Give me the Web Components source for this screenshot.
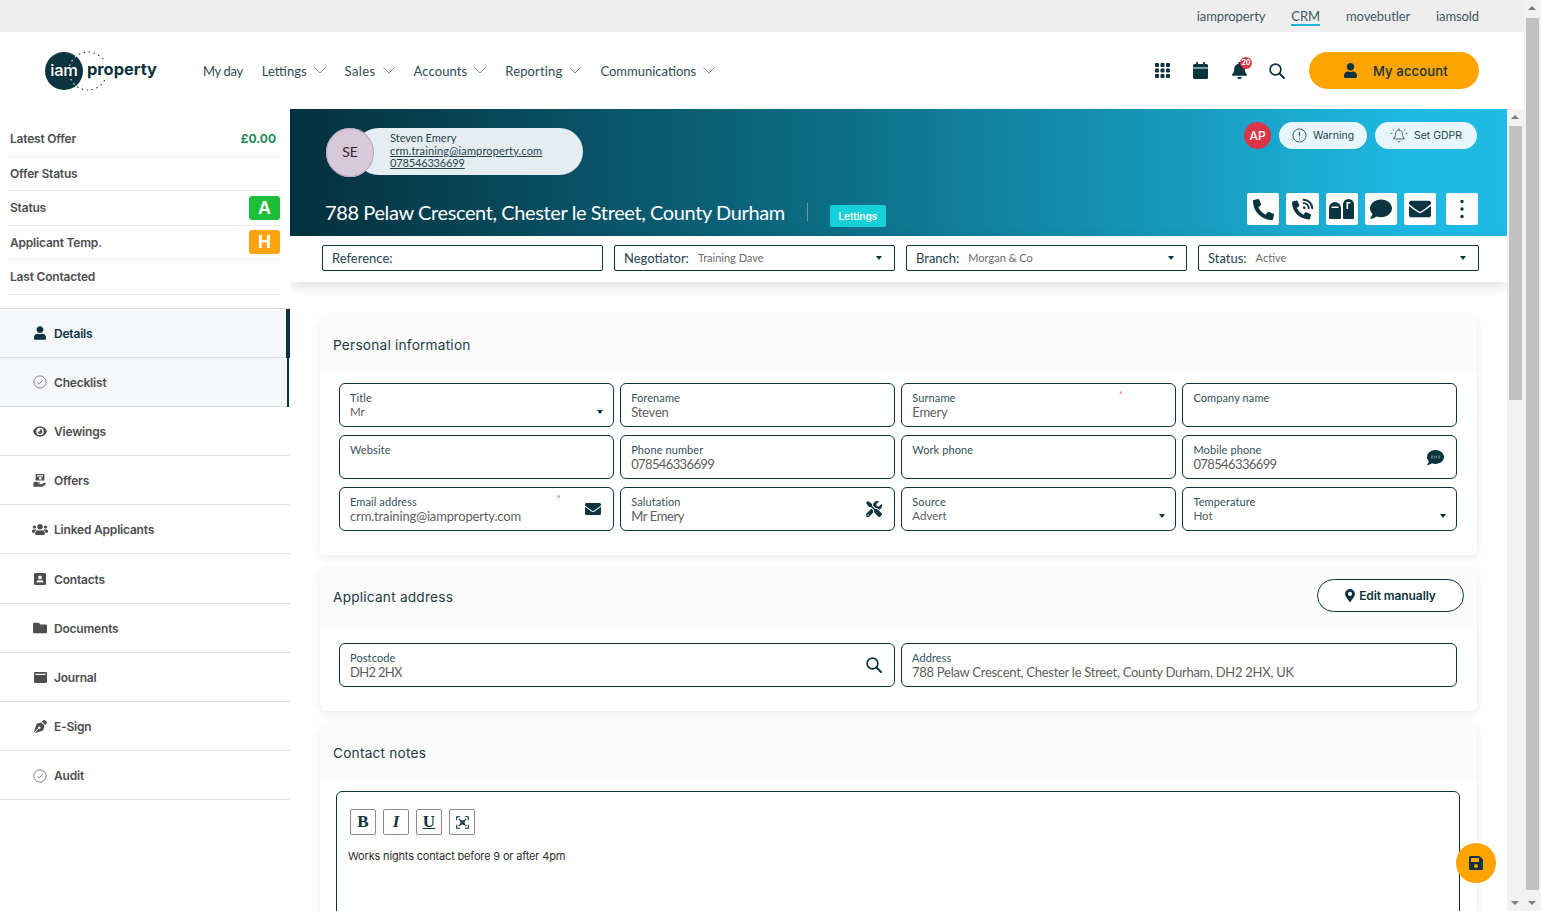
<!DOCTYPE html>
<html lang="en">
<head>
<meta charset="utf-8">
<title>Applicant</title>
<style>
    html, body { margin: 0; height: 100%; overflow: hidden; }
    body {
        display: flex;
        background: #fff;
        color: #0b3340;
        font-family: "Lato", "Liberation Sans", sans-serif;
    }
    .frame { flex: 1; min-width: 0; display: flex; flex-direction: column; height: 911px; }
    .work { flex: 1; min-height: 0; display: flex; }
    .pane { flex: 1; min-width: 0; display: flex; flex-direction: column; overflow: hidden; position: relative; }
    .content { flex: 1; min-height: 0; overflow: hidden; display: flex; flex-direction: column; gap: 13px; padding: 34px 30px 0; }
    .grid4 { display: grid; grid-template-columns: repeat(4, 1fr); gap: 8px 6.6px; }
    .grid2 { display: grid; grid-template-columns: repeat(2, 1fr); gap: 6px; }
</style>
</head>
<body>
<div class="frame">
    <top-bar></top-bar>
    <main-header></main-header>
    <div class="work">
        <side-panel></side-panel>
        <div class="pane">
            <record-banner></record-banner>
            <filter-bar></filter-bar>
            <div class="content">
                <form-card heading="Personal information">
                    <div class="grid4">
                        <field-box label="Title" value="Mr" select></field-box>
                        <field-box label="Forename" value="Steven"></field-box>
                        <field-box label="Surname" value="Emery" required></field-box>
                        <field-box label="Company name"></field-box>
                        <field-box label="Website"></field-box>
                        <field-box label="Phone number" value="078546336699" style="--track:-.62px"></field-box>
                        <field-box label="Work phone"></field-box>
                        <field-box label="Mobile phone" value="078546336699" icon="sms" style="--track:-.62px"></field-box>
                        <field-box label="Email address" value="crm.training@iamproperty.com" required icon="envelope" style="--track:-.15px"></field-box>
                        <field-box label="Salutation" value="Mr Emery" icon="tools" style="--track:-.4px"></field-box>
                        <field-box label="Source" value="Advert" select></field-box>
                        <field-box label="Temperature" value="Hot" select></field-box>
                    </div>
                </form-card>
                <form-card heading="Applicant address" roomy>
                    <outline-button slot="action"></outline-button>
                    <div class="grid2">
                        <field-box label="Postcode" value="DH2 2HX" icon="search" style="--track:-.7px"></field-box>
                        <field-box label="Address" value="788 Pelaw Crescent, Chester le Street, County Durham, DH2 2HX, UK" style="--track:-.27px"></field-box>
                    </div>
                </form-card>
                <form-card heading="Contact notes" flush>
                    <notes-editor>Works nights contact before 9 or after 4pm</notes-editor>
                </form-card>
            </div>
            <save-fab></save-fab>
        </div>
        <scroll-bar thumb-top="17" thumb-height="274"></scroll-bar>
    </div>
</div>
<scroll-bar thumb-top="18" thumb-height="872"></scroll-bar>

<script>
const ICONS = {
    user: ['0 0 448 512', '<path d="M224 256c70.7 0 128-57.3 128-128S294.7 0 224 0 96 57.3 96 128s57.3 128 128 128zm89.6 32h-16.7c-22.2 10.2-46.9 16-72.9 16s-50.6-5.8-72.9-16h-16.7C60.2 288 0 348.2 0 422.4V464c0 26.5 21.5 48 48 48h352c26.5 0 48-21.5 48-48v-41.6c0-74.2-60.2-134.4-134.4-134.4z"/>'],
    phone: ['0 0 512 512', '<path d="M497.39 361.8l-112-48a24 24 0 0 0-28 6.9l-49.6 60.6A370.66 370.66 0 0 1 130.6 204.11l60.6-49.6a23.94 23.94 0 0 0 6.9-28l-48-112A24.16 24.16 0 0 0 122.6.61l-104 24A24 24 0 0 0 0 48c0 256.5 207.9 464 464 464a24 24 0 0 0 23.4-18.6l24-104a24.29 24.29 0 0 0-14.01-27.6z"/>'],
    phonewave: ['0 0 512 512', '<path transform="translate(0 60) scale(.86)" d="M497.39 361.8l-112-48a24 24 0 0 0-28 6.9l-49.6 60.6A370.66 370.66 0 0 1 130.6 204.11l60.6-49.6a23.94 23.94 0 0 0 6.9-28l-48-112A24.16 24.16 0 0 0 122.6.61l-104 24A24 24 0 0 0 0 48c0 256.5 207.9 464 464 464a24 24 0 0 0 23.4-18.6l24-104a24.29 24.29 0 0 0-14.01-27.6z"/><g fill="none" stroke="currentColor" stroke-width="44" stroke-linecap="round"><path d="M270 40c110 0 200 90 200 200"/><path d="M270 120c66 0 120 54 120 120"/></g><circle cx="285" cy="225" r="30"/>'],
    mailbox: ['0 0 26 20', '<path fill-rule="evenodd" d="M6 3a6 6 0 0 1 6 6v10a1 1 0 0 1-1 1H1a1 1 0 0 1-1-1V9a6 6 0 0 1 6-6zM2.500 7.500V9h7V7.500z"/><path fill-rule="evenodd" d="M19.500 0A5.500 5.500 0 0 1 25 5.500V19a1 1 0 0 1-1 1h-9a1 1 0 0 1-1-1V5.500A5.500 5.500 0 0 1 19.500 0zM17.500 3v7h1.600V4.600h2.400V3z"/>'],
    comment: ['0 0 512 512', '<path d="M256 32C114.6 32 0 125.1 0 240c0 49.6 21.4 95 57 130.7C44.5 421.1 2.7 466 2.2 466.5c-2.2 2.3-2.8 5.7-1.5 8.7S4.8 480 8 480c66.3 0 116-31.8 140.6-51.4 32.7 12.3 69 19.4 107.4 19.4 141.4 0 256-93.1 256-208S397.4 32 256 32z"/>'],
    envelope: ['0 0 512 512', '<path d="M502.3 190.8c3.9-3.1 9.7-.2 9.7 4.7V400c0 26.5-21.5 48-48 48H48c-26.5 0-48-21.5-48-48V195.6c0-5 5.7-7.8 9.7-4.7 22.4 17.4 52.1 39.5 154.1 113.6 21.1 15.4 56.7 47.8 92.2 47.6 35.7.3 72-32.8 92.3-47.6 102-74.1 131.6-96.3 154-113.7zM256 320c23.2.4 56.6-29.2 73.4-41.4 132.7-96.3 142.8-104.7 173.4-128.7 5.8-4.5 9.2-11.5 9.2-18.9v-19c0-26.5-21.5-48-48-48H48C21.5 64 0 85.5 0 112v19c0 7.4 3.4 14.3 9.2 18.9 30.6 23.9 40.7 32.4 173.4 128.7 16.8 12.2 50.2 41.8 73.4 41.4z"/>'],
    dots: ['0 0 16 32', '<circle cx="8" cy="6" r="2.2"/><circle cx="8" cy="16" r="2.2"/><circle cx="8" cy="26" r="2.2"/>'],
    grid: ['0 0 15 15', '<rect width="4" height="4" rx=".9"/><rect x="5.5" width="4" height="4" rx=".9"/><rect x="11" width="4" height="4" rx=".9"/><rect y="5.5" width="4" height="4" rx=".9"/><rect x="5.5" y="5.5" width="4" height="4" rx=".9"/><rect x="11" y="5.5" width="4" height="4" rx=".9"/><rect y="11" width="4" height="4" rx=".9"/><rect x="5.5" y="11" width="4" height="4" rx=".9"/><rect x="11" y="11" width="4" height="4" rx=".9"/>'],
    calendar: ['0 0 15 17', '<rect x="3" width="2" height="4" rx=".8"/><rect x="10" width="2" height="4" rx=".8"/><path d="M1.500 2H13.500A1.500 1.500 0 0 1 15 3.500V5.500H0V3.500A1.500 1.500 0 0 1 1.500 2zM0 6.500h15V15.500A1.500 1.500 0 0 1 13.500 17h-12A1.500 1.500 0 0 1 0 15.500z"/>'],
    bell: ['0 0 448 512', '<path d="M224 512c35.32 0 63.97-28.65 63.97-64H160.03c0 35.35 28.65 64 63.97 64zm215.39-149.71c-19.32-20.76-55.47-51.99-55.47-154.29 0-77.7-54.48-139.9-127.94-155.16V32c0-17.67-14.32-32-31.98-32s-31.98 14.33-31.98 32v20.84C118.56 68.1 64.08 130.3 64.08 208c0 102.3-36.15 133.53-55.47 154.29-6 6.45-8.66 14.16-8.61 21.71.11 16.4 12.98 32 32.1 32h383.8c19.12 0 32-15.6 32.1-32 .05-7.55-2.61-15.27-8.61-21.71z"/>'],
    search: ['0 0 16 16', '<circle cx="6.500" cy="6.500" r="5.400" fill="none" stroke="currentColor" stroke-width="1.700"/><path d="M10.500 10.500L15 15" fill="none" stroke="currentColor" stroke-width="2" stroke-linecap="round"/>'],
    check: ['0 0 16 16', '<circle cx="8" cy="8" r="7" fill="none" stroke="currentColor" stroke-width=".8"/><path d="M5 8.300l2.100 2L11 6" fill="none" stroke="currentColor" stroke-width=".8"/>'],
    eye: ['0 0 16 12', '<path fill-rule="evenodd" d="M8 0c3.700 0 6.700 2.400 8 6-1.300 3.600-4.300 6-8 6S1.300 9.600 0 6c1.300-3.600 4.300-6 8-6zm0 1.800A4.200 4.200 0 1 0 8 10.200 4.200 4.200 0 0 0 8 1.800z"/><path d="M8 3.300a2.700 2.700 0 1 1-2.700 2.700c.6.500 1.600.4 2.100-.2.500-.5.600-1.700.6-2.500z"/>'],
    offers: ['0 0 16 16', '<path fill-rule="evenodd" d="M3 0h10v7.500H3zM4.500 1.300v1.500h7V1.300zM6.800 3.600v2.600h3V3.600z"/><path d="M.5 9.700c1.200-.9 2.600-1 4-.6l3 .7c.8.2.8 1.400-.2 1.400H5.500v.6h3.700l3.500-1.500c1.200-.5 2.200.2 1.800 1-1.500 1.800-3.400 3.400-5.900 3.400H.5z"/>'],
    users: ['0 0 640 512', '<path d="M96 224c35.300 0 64-28.700 64-64s-28.700-64-64-64-64 28.700-64 64 28.700 64 64 64zm448 0c35.300 0 64-28.700 64-64s-28.700-64-64-64-64 28.700-64 64 28.700 64 64 64zm32 32h-64c-17.600 0-33.500 7.100-45.100 18.600 40.300 22.100 68.900 62 75.100 109.400h66c17.700 0 32-14.300 32-32v-32c0-35.300-28.700-64-64-64zm-256 0c61.900 0 112-50.100 112-112S381.900 32 320 32 208 82.100 208 144s50.100 112 112 112zm76.800 32h-8.300c-20.800 10-43.900 16-68.500 16s-47.600-6-68.500-16h-8.300C179.600 288 128 339.600 128 403.200V432c0 26.500 21.500 48 48 48h288c26.500 0 48-21.500 48-48v-28.800c0-63.600-51.600-115.200-115.200-115.200zm-223.700-13.400C161.500 263.100 145.600 256 128 256H64c-35.300 0-64 28.700-64 64v32c0 17.700 14.300 32 32 32h65.900c6.300-47.400 34.900-87.300 75.200-109.400z"/>'],
    contact: ['0 0 14 14', '<path fill-rule="evenodd" d="M1.500 0h11A1.500 1.500 0 0 1 14 1.500v11a1.500 1.500 0 0 1-1.500 1.500h-11A1.500 1.500 0 0 1 0 12.500v-11A1.500 1.500 0 0 1 1.500 0zM7 3a2.200 2.200 0 1 0 0 4.400A2.200 2.200 0 0 0 7 3zM3 11.200h8c0-1.800-1.100-3-2.600-3-.9.400-1.900.4-2.800 0-1.500 0-2.600 1.200-2.600 3z"/>'],
    folder: ['0 0 512 512', '<path d="M464 128H272l-64-64H48C21.490 64 0 85.490 0 112v288c0 26.510 21.490 48 48 48h416c26.510 0 48-21.490 48-48V176c0-26.510-21.490-48-48-48z"/>'],
    journal: ['0 0 14 14', '<path fill-rule="evenodd" d="M1.500 1h11A1.500 1.500 0 0 1 14 2.500v9a1.500 1.500 0 0 1-1.500 1.500h-11A1.500 1.500 0 0 1 0 11.500v-9A1.500 1.500 0 0 1 1.500 1zM1.500 3v1.300h11V3z"/>'],
    pen: ['0 0 512 512', '<path d="M136.600 138.790a64.003 64.003 0 0 0-43.310 41.350L0 460l14.690 14.690L164.800 324.580c-2.990-6.260-4.800-13.180-4.800-20.580 0-26.510 21.490-48 48-48s48 21.490 48 48-21.490 48-48 48c-7.400 0-14.320-1.810-20.580-4.800L37.310 497.310 52 512l279.860-93.290a64.003 64.003 0 0 0 41.350-43.310L416 224 288 96l-151.400 42.790zm361.340-64.620l-60.110-60.110c-18.750-18.750-49.160-18.750-67.910 0l-56.550 56.550 128.020 128.020 56.550-56.550c18.750-18.750 18.750-49.150 0-67.910z"/>'],
    sms: ['0 0 512 512', '<path d="M256 32C114.600 32 0 125.100 0 240c0 49.600 21.400 95 57 130.700C44.500 421.100 2.700 466 2.200 466.500c-2.200 2.300-2.800 5.700-1.500 8.700S4.800 480 8 480c66.300 0 116-31.800 140.600-51.400 32.700 12.300 69 19.400 107.400 19.400 141.400 0 256-93.100 256-208S397.400 32 256 32z"/><g fill="#fff"><rect x="120" y="205" width="60" height="14"/><rect x="120" y="262" width="60" height="14"/><rect x="222" y="205" width="14" height="70"/><rect x="276" y="205" width="14" height="70"/><rect x="335" y="205" width="60" height="14"/><rect x="335" y="262" width="60" height="14"/></g>'],
    tools: ['0 0 512 512', '<path d="M501.100 395.700L384 278.600c-23.100-23.100-57.600-27.600-85.400-13.900L192 158.100V96L64 0 0 64l96 128h62.100l106.600 106.600c-13.600 27.800-9.200 62.300 13.900 85.400l117.100 117.100c14.600 14.600 38.200 14.600 52.700 0l52.700-52.700c14.500-14.600 14.500-38.200 0-52.700zM331.700 225c28.300 0 54.900 11 74.900 31l19.400 19.400c15.800-6.900 30.800-16.500 43.800-29.500 37.100-37.100 49.700-89.300 37.900-136.700-2.200-9-13.500-12.100-20.100-5.500l-74.400 74.400-67.900-11.300L334 98.900l74.400-74.400c6.600-6.600 3.400-17.900-5.700-20.200-47.400-11.700-99.600.9-136.600 37.900-28.500 28.500-41.900 66.100-41.200 103.600l82.100 82.100c8.100-1.900 16.500-2.900 24.700-2.900zm-103.900 82l-56.700-56.700L18.700 402.800c-25 25-25 65.500 0 90.500s65.500 25 90.500 0l123.600-123.600c-7.600-19.900-9.900-41.600-5-62.700zM64 472c-13.200 0-24-10.800-24-24 0-13.300 10.700-24 24-24s24 10.700 24 24c0 13.200-10.700 24-24 24z"/>'],
    marker: ['0 0 384 512', '<path d="M172.268 501.670C26.970 291.031 0 268.413 0 192 0 85.961 85.961 0 192 0s192 85.961 192 192c0 76.413-26.970 99.031-172.268 309.670-9.535 13.774-29.930 13.773-39.464 0zM192 272c44.183 0 80-35.817 80-80s-35.817-80-80-80-80 35.817-80 80 35.817 80 80 80z"/>'],
    save: ['0 0 448 512', '<path d="M433.941 129.941l-83.882-83.882A48 48 0 0 0 316.118 32H48C21.490 32 0 53.490 0 80v352c0 26.510 21.490 48 48 48h352c26.510 0 48-21.490 48-48V163.882a48 48 0 0 0-14.059-33.941zM224 416c-35.346 0-64-28.654-64-64 0-35.346 28.654-64 64-64s64 28.654 64 64c0 35.346-28.654 64-64 64zm96-304.520V212c0 6.627-5.373 12-12 12H76c-6.627 0-12-5.373-12-12V108c0-6.627 5.373-12 12-12h228.520c3.183 0 6.235 1.264 8.485 3.515l3.480 3.480A11.996 11.996 0 0 1 320 111.480z"/>'],
    alert: ['0 0 16 16', '<circle cx="8" cy="8" r="7" fill="none" stroke="currentColor" stroke-width=".9"/><path d="M8 4v5M8 11v1.200" fill="none" stroke="currentColor" stroke-width="1"/>'],
    bellline: ['0 0 20 18', '<g fill="none" stroke="currentColor" stroke-width=".9"><path d="M10 2.500c-2.700 0-4 2-4 4.300 0 3-1.100 4-2.200 5.500h12.400C15.100 10.800 14 9.800 14 6.800c0-2.300-1.300-4.300-4-4.300z"/><path d="M10 .6v1.900M8.500 14.500c.3 1.500 2.700 1.500 3 0M3 1.500l1.500 1.500M17 1.500L15.500 3M.5 6h2M17.500 6h2"/></g>'],
    expand: ['0 0 14 14', '<g fill="none" stroke="currentColor" stroke-width="1.200"><path d="M.8 4.500V.8h3.700M9.500.8h3.700v3.700M13.200 9.500v3.700H9.500M4.500 13.200H.8V9.500"/><path d="M3 3l8 8M11 3l-8 8"/><rect x="5.300" y="5.300" width="3.400" height="3.400"/></g>']
};

class AppIcon extends HTMLElement {
    constructor() {
        super();
        this.attachShadow({ mode: 'open' });
        const [box, body] = ICONS[this.getAttribute('name')];
        const w = this.getAttribute('w') || 14;
        const h = this.getAttribute('h') || w;
        this.shadowRoot.innerHTML = `
            <style>
                :host { display: inline-flex; flex: none; line-height: 0; }
                svg { fill: currentColor; display: block; }
            </style>
            <svg width="${w}" height="${h}" viewBox="${box}">${body}</svg>
        `;
    }
}
customElements.define('app-icon', AppIcon);

class TopBar extends HTMLElement {
    constructor() {
        super();
        this.attachShadow({ mode: 'open' });
        this.shadowRoot.innerHTML = `
            <style>
                :host {
                    display: flex;
                    justify-content: flex-end;
                    align-items: center;
                    gap: 26px;
                    height: 32px;
                    padding-right: 45px;
                    background: #eee;
                    font: 13px "Lato", sans-serif;
                    letter-spacing: -.1px;
                    color: #3d5862;
                }
                span { position: relative; line-height: 16px; }
                .on::after {
                    content: "";
                    position: absolute;
                    left: 0; right: 0; bottom: -2px;
                    height: 2px;
                    background: #1fb3d1;
                }
            </style>
            <span>iamproperty</span><span class="on">CRM</span><span>movebutler</span><span>iamsold</span>
        `;
    }
}
customElements.define('top-bar', TopBar);

class MainHeader extends HTMLElement {
    constructor() {
        super();
        this.attachShadow({ mode: 'open' });
        const chevron = `<svg class="chev" width="12" height="7" viewBox="0 0 12 7"><path d="M.5.5L6 6l5.500-5.500" fill="none" stroke="#6b8088" stroke-width=".9"/></svg>`;
        const dots = 'fill="none" stroke-width="1.100" stroke-dasharray=".6 4.400" stroke-linecap="round"';
        this.shadowRoot.innerHTML = `
            <style>
                :host {
                    display: flex;
                    align-items: center;
                    height: 77px;
                    padding: 0 45px;
                    background: #fff;
                    font: 13px "Lato", sans-serif;
                    color: #2e4b55;
                }
                .logo { position: relative; width: 112px; height: 40px; flex: none; }
                .disc {
                    position: absolute; left: 0; top: 1px;
                    width: 38px; height: 38px; border-radius: 50%;
                    background: #0b3340; color: #fff;
                    font: 500 16.5px/36px "Inter", sans-serif;
                    text-align: center;
                    letter-spacing: -.3px;
                }
                .ring { position: absolute; left: 24px; top: 0; }
                .word {
                    position: absolute; left: 42px; top: 8px;
                    padding-right: 1px;
                    background: #fff;
                    font: 700 16.4px/21px "Inter", sans-serif;
                    color: #0b3340;
                }
                nav { display: flex; align-items: center; gap: 19px; margin-left: 46px; }
                nav span { display: inline-flex; align-items: center; }
                .chev { margin-left: 7px; }
                .tools { margin-left: auto; display: flex; align-items: center; color: #0b3340; }
                .bell { position: relative; display: inline-flex; }
                .count {
                    position: absolute; right: -5px; top: -5px;
                    width: 12px; height: 12px; border-radius: 50%;
                    background: #d8344a; color: #fff;
                    font: 700 7px/12px "Inter", sans-serif;
                    text-align: center;
                }
                .account {
                    display: flex; align-items: center;
                    width: 170px; height: 37px; box-sizing: border-box;
                    margin-left: 24px; padding-left: 35px;
                    border-radius: 19px;
                    background: #ffa400;
                    font: 500 13px "Inter", sans-serif;
                    letter-spacing: .15px;
                    color: #0b3340;
                }
                .account app-icon { margin-right: 16px; }
            </style>
            <div class="logo">
                <div class="disc">iam</div>
                <svg class="ring" width="40" height="40" viewBox="0 0 40 40">
                    <clipPath id="disc"><circle cx="-5" cy="20" r="19"/></clipPath>
                    <circle cx="19" cy="20" r="19" stroke="#0b3340" ${dots}/>
                    <g clip-path="url(#disc)"><circle cx="19" cy="20" r="19" stroke="#fff" ${dots}/></g>
                </svg>
                <div class="word">property</div>
            </div>
            <nav>
                <span style="letter-spacing:-.35px">My day</span>
                <span>Lettings${chevron}</span>
                <span style="letter-spacing:.4px">Sales${chevron}</span>
                <span style="letter-spacing:.1px">Accounts${chevron}</span>
                <span style="letter-spacing:.15px">Reporting${chevron}</span>
                <span>Communications${chevron}</span>
            </nav>
            <div class="tools">
                <app-icon name="grid" w="15" style="margin-right:23px"></app-icon>
                <app-icon name="calendar" w="15" h="17" style="margin-right:24px"></app-icon>
                <span class="bell" style="margin-right:22px"><app-icon name="bell" w="15" h="17"></app-icon><span class="count">20</span></span>
                <app-icon name="search" w="16"></app-icon>
                <div class="account"><app-icon name="user" w="13" h="15"></app-icon>My account</div>
            </div>
        `;
    }
}
customElements.define('main-header', MainHeader);

class InfoRow extends HTMLElement {
    constructor() {
        super();
        this.attachShadow({ mode: 'open' });
        this.shadowRoot.innerHTML = `
            <style>
                :host {
                    display: flex;
                    justify-content: space-between;
                    align-items: center;
                    height: 34.5px;
                    box-sizing: border-box;
                    padding-left: 2px;
                    border-bottom: 1px solid #eee;
                    font: 600 12px "Inter", sans-serif;
                    letter-spacing: -.2px;
                    color: #4d4d4f;
                }
            </style>
            <span>${this.getAttribute('label')}</span><slot></slot>
        `;
    }
}
customElements.define('info-row', InfoRow);

class NavItem extends HTMLElement {
    constructor() {
        super();
        this.attachShadow({ mode: 'open' });
        const w = this.getAttribute('w') || 14;
        const h = this.getAttribute('h') || w;
        this.shadowRoot.innerHTML = `
            <style>
                :host {
                    display: flex;
                    align-items: center;
                    gap: 7px;
                    height: 49.2px;
                    box-sizing: border-box;
                    padding: 1px 0 0 33px;
                    border-bottom: 1px solid #dcdfe2;
                    font: 600 12px "Inter", sans-serif;
                    letter-spacing: -.2px;
                    color: #4d4d4f;
                    position: relative;
                }
                :host([tint]) { background: #f6f7f9; }
                :host([active]) { color: #0b3340; }
                :host([tint])::after {
                    content: "";
                    position: absolute; right: 1px; top: 0; bottom: -1px;
                    width: 2px;
                    background: #0b3340;
                }
                :host([active])::after { right: 0; width: 4px; }
                .ico { width: 14px; display: flex; justify-content: center; }
            </style>
            <span class="ico"><app-icon name="${this.getAttribute('icon')}" w="${w}" h="${h}"></app-icon></span>
            <slot></slot>
        `;
    }
}
customElements.define('nav-item', NavItem);

class SidePanel extends HTMLElement {
    constructor() {
        super();
        this.attachShadow({ mode: 'open' });
        this.shadowRoot.innerHTML = `
            <style>
                :host { display: block; width: 290px; flex: none; padding-top: 13px; box-sizing: border-box; background: #fff; }
                .rows { margin: 0 10px 13px 8px; }
                .money { color: #1f8a58; font-weight: 700; font-size: 12px; padding-right: 4px; letter-spacing: 0; }
                .badge {
                    width: 31px; height: 24px; border-radius: 3px;
                    color: #fff; text-align: center;
                    font: 700 18px/24px "Liberation Sans", sans-serif;
                }
                .nav { border-top: 1px solid #dcdfe2; }
            </style>
            <div class="rows">
                <info-row label="Latest Offer"><span class="money">£0.00</span></info-row>
                <info-row label="Offer Status"></info-row>
                <info-row label="Status"><span class="badge" style="background:#1dbf3a">A</span></info-row>
                <info-row label="Applicant Temp."><span class="badge" style="background:#fca311">H</span></info-row>
                <info-row label="Last Contacted"></info-row>
            </div>
            <div class="nav">
                <nav-item icon="user" w="12" h="14" active tint>Details</nav-item>
                <nav-item icon="check" tint>Checklist</nav-item>
                <nav-item icon="eye" w="14" h="11">Viewings</nav-item>
                <nav-item icon="offers">Offers</nav-item>
                <nav-item icon="users" w="16" h="13">Linked Applicants</nav-item>
                <nav-item icon="contact" w="12" h="12">Contacts</nav-item>
                <nav-item icon="folder" w="14" h="14">Documents</nav-item>
                <nav-item icon="journal" w="13" h="13">Journal</nav-item>
                <nav-item icon="pen" w="13" h="13">E-Sign</nav-item>
                <nav-item icon="check">Audit</nav-item>
            </div>
        `;
    }
}
customElements.define('side-panel', SidePanel);

class RecordBanner extends HTMLElement {
    constructor() {
        super();
        this.attachShadow({ mode: 'open' });
        const act = (name, w, h) => `<span class="act"><app-icon name="${name}" w="${w}" h="${h || w}"></app-icon></span>`;
        this.shadowRoot.innerHTML = `
            <style>
                :host {
                    display: flex;
                    flex-direction: column;
                    justify-content: space-between;
                    flex: none;
                    height: 127px;
                    box-sizing: border-box;
                    padding: 13px 29px 11px 35px;
                    background: linear-gradient(90deg, #04303e 0%, #0c6e86 45%, #1eb8e2 92%, #1fbbe5 100%);
                    font-family: "Lato", sans-serif;
                }
                .top, .bottom { display: flex; align-items: flex-start; justify-content: space-between; }
                .bottom { height: 32px; }
                .contact { display: flex; align-items: flex-start; margin-top: 6px; margin-left: 1px; }
                .avatar {
                    width: 48px; height: 49px; border-radius: 50%;
                    background: #d7c9d7; color: #32222f;
                    font: 14px/48px "Lato", sans-serif;
                    text-align: center;
                    position: relative;
                    box-shadow: inset 0 0 0 1px #b9a9b9;
                }
                .card {
                    margin-left: -19px;
                    width: 228px; height: 47px; box-sizing: border-box;
                    padding: 3px 0 0 35px;
                    border-radius: 24px;
                    background: #e6edf0;
                    font-size: 11px; line-height: 13px;
                    color: #24434e;
                }
                .card u { display: block; letter-spacing: .14px; }
                .card u + u { letter-spacing: -.15px; margin-top: -1px; }
                .pills { display: flex; align-items: center; gap: 8px; margin-right: 1px; }
                .ap {
                    width: 27px; height: 27px; border-radius: 50%;
                    background: #dc3545; color: #fff;
                    font: 500 12px/27px "Inter", sans-serif;
                    text-align: center;
                }
                .pill {
                    display: flex; align-items: center; justify-content: center; gap: 6px;
                    height: 27px; border-radius: 14px;
                    background: #e7f6fc;
                    font: 10.5px "Inter", sans-serif;
                    color: #24434e;
                }
                .title { display: flex; align-items: flex-start; color: #fff; }
                h1 { margin: 7px 0 0; font: 400 20px/24px "Lato", sans-serif; letter-spacing: -.39px; white-space: nowrap; }
                .sep { width: 1px; height: 18px; background: #6f9aa5; margin: 10px 22px 0; }
                .tag {
                    width: 56px; height: 22px; margin-top: 12px; border-radius: 2px;
                    background: #14d0d9; color: #fff;
                    font: 600 10px/22px "Inter", sans-serif;
                    text-align: center;
                }
                .acts { display: flex; gap: 7px; color: #0b3340; }
                .act {
                    width: 32px; height: 32px; border-radius: 2px;
                    background: #fff;
                    display: flex; align-items: center; justify-content: center;
                }
                .act:nth-child(2) { width: 33px; }
                .act:last-child { margin-left: 3px; }
            </style>
            <div class="top">
                <div class="contact">
                    <div class="avatar">SE</div>
                    <div class="card">Steven Emery<u>crm.training@iamproperty.com</u><u>078546336699</u></div>
                </div>
                <div class="pills">
                    <span class="ap">AP</span>
                    <span class="pill" style="width:88px"><app-icon name="alert" w="15"></app-icon>Warning</span>
                    <span class="pill" style="width:102px"><app-icon name="bellline" w="18" h="16"></app-icon>Set GDPR</span>
                </div>
            </div>
            <div class="bottom">
                <div class="title">
                    <h1>788 Pelaw Crescent, Chester le Street, County Durham</h1>
                    <span class="sep"></span>
                    <span class="tag">Lettings</span>
                </div>
                <div class="acts">
                    ${act('phone', 21)}${act('phonewave', 22)}${act('mailbox', 26, 20)}${act('comment', 22)}${act('envelope', 22)}${act('dots', 16, 24)}
                </div>
            </div>
        `;
    }
}
customElements.define('record-banner', RecordBanner);

class FilterBox extends HTMLElement {
    constructor() {
        super();
        this.attachShadow({ mode: 'open' });
        const value = this.getAttribute('value');
        this.shadowRoot.innerHTML = `
            <style>
                :host {
                    display: flex;
                    align-items: center;
                    height: 26px;
                    box-sizing: border-box;
                    padding: 0 12px 1px 9px;
                    border: 1px solid #0b3340;
                    border-radius: 2px;
                    background: #fff;
                    font: 13px "Lato", sans-serif;
                    color: #24434e;
                    position: relative;
                }
                .v { margin-left: 9px; font-size: 11px; color: #6a6a6a; }
                .caret {
                    margin-left: auto;
                    border: 3px solid transparent;
                    border-top: 4px solid #0b3340;
                    border-bottom: 0;
                }
            </style>
            <span>${this.getAttribute('label')}</span>
            ${value ? `<span class="v">${value}</span><span class="caret"></span>` : ''}
        `;
    }
}
customElements.define('filter-box', FilterBox);

class FilterBar extends HTMLElement {
    constructor() {
        super();
        this.attachShadow({ mode: 'open' });
        this.shadowRoot.innerHTML = `
            <style>
                :host {
                    display: grid;
                    grid-template-columns: repeat(4, 1fr);
                    gap: 11px;
                    align-items: start;
                    flex: none;
                    height: 46px;
                    box-sizing: border-box;
                    padding: 9px 28px 0 32px;
                    background: #fff;
                    box-shadow: 0 4px 12px rgba(0, 0, 0, .13);
                    position: relative;
                }
            </style>
            <filter-box label="Reference:"></filter-box>
            <filter-box label="Negotiator:" value="Training Dave"></filter-box>
            <filter-box label="Branch:" value="Morgan &amp; Co"></filter-box>
            <filter-box label="Status:" value="Active"></filter-box>
        `;
    }
}
customElements.define('filter-bar', FilterBar);

class FormCard extends HTMLElement {
    constructor() {
        super();
        this.attachShadow({ mode: 'open' });
        this.shadowRoot.innerHTML = `
            <style>
                :host {
                    display: block;
                    flex: none;
                    border-radius: 6px;
                    background: #fff;
                    box-shadow: 0 2px 10px rgba(0, 0, 0, .09);
                }
                header {
                    display: flex;
                    justify-content: space-between;
                    align-items: center;
                    height: 58px;
                    padding: 0 13px;
                    background: #fbfbfb;
                    border-radius: 6px 6px 0 0;
                    font: 400 13.7px "Inter", sans-serif;
                    letter-spacing: .2px;
                    color: #1c3a44;
                }
                ::slotted([slot="action"]) { margin-top: -3px; }
                .body { padding: 9px 20px 24px 19px; }
                :host([roomy]) .body { padding-top: 17px; }
                :host([flush]) .body { padding: 9px 17px 0 16px; }
            </style>
            <header><span>${this.getAttribute('heading')}</span><slot name="action"></slot></header>
            <div class="body"><slot></slot></div>
        `;
    }
}
customElements.define('form-card', FormCard);

class FieldBox extends HTMLElement {
    constructor() {
        super();
        this.attachShadow({ mode: 'open' });
        const value = this.getAttribute('value') || '';
        const select = this.hasAttribute('select');
        const icon = this.getAttribute('icon');
        const iconSize = { sms: 17, envelope: 16, tools: 16, search: 16 }[icon];
        this.shadowRoot.innerHTML = `
            <style>
                :host {
                    display: flex;
                    align-items: center;
                    justify-content: space-between;
                    height: 44px;
                    box-sizing: border-box;
                    padding: 0 12px 0 10px;
                    border: 1px solid #0b3340;
                    border-radius: 6px;
                    background: #fff;
                    position: relative;
                    font-family: "Lato", sans-serif;
                }
                .label { font: 11px/14px "Lato", sans-serif; color: #31505a; letter-spacing: .1px; }
                .value { font-size: 13px; line-height: 15px; color: #5d5d5d; height: 15px; letter-spacing: var(--track, -.22px); }
                .value.sel { font-size: 11.5px; line-height: 14px; letter-spacing: 0; }
                .text { display: flex; flex-direction: column; margin-top: 1px; }
                .star { position: absolute; right: 52px; top: 6px; color: #e2505f; font-size: 9px; line-height: 9px; }
                .caret {
                    position: absolute; right: 10px; top: 26px;
                    border: 3px solid transparent;
                    border-top: 4px solid #0b3340;
                    border-bottom: 0;
                }
                app-icon { color: #0b3340; }
            </style>
            <div class="text">
                <span class="label">${this.getAttribute('label')}</span>
                <span class="value ${select ? 'sel' : ''}">${value}</span>
            </div>
            ${this.hasAttribute('required') ? '<span class="star">*</span>' : ''}
            ${select ? '<span class="caret"></span>' : ''}
            ${icon ? `<app-icon name="${icon}" w="${iconSize}"></app-icon>` : ''}
        `;
    }
}
customElements.define('field-box', FieldBox);

class OutlineButton extends HTMLElement {
    constructor() {
        super();
        this.attachShadow({ mode: 'open' });
        this.shadowRoot.innerHTML = `
            <style>
                :host {
                    display: flex;
                    align-items: center;
                    justify-content: center;
                    gap: 4px;
                    width: 147px;
                    height: 33px;
                    box-sizing: border-box;
                    border: 1px solid #0b3340;
                    border-radius: 17px;
                    background: #fff;
                    font: 600 12px "Inter", sans-serif;
                    letter-spacing: -.1px;
                    color: #0b3340;
                }
            </style>
            <app-icon name="marker" w="10" h="13"></app-icon>Edit manually
        `;
    }
}
customElements.define('outline-button', OutlineButton);

class NotesEditor extends HTMLElement {
    constructor() {
        super();
        this.attachShadow({ mode: 'open' });
        this.shadowRoot.innerHTML = `
            <style>
                :host {
                    display: block;
                    height: 200px;
                    box-sizing: border-box;
                    padding: 17px 11px;
                    border: 1px solid #0b3340;
                    border-radius: 6px;
                    background: #fff;
                }
                .bar { display: flex; gap: 7px; margin-left: 2px; }
                .b {
                    width: 26px; height: 26px; box-sizing: border-box;
                    border: 1px solid #8b8b8b; border-radius: 2px;
                    display: flex; align-items: center; justify-content: center;
                    font: 700 17px "Liberation Serif", serif;
                    color: #0b3340;
                }
                .text { margin-top: 14px; font: 11px/14px "Inter", sans-serif; color: #2d2d2d; letter-spacing: -.17px; }
            </style>
            <div class="bar">
                <span class="b">B</span><span class="b"><i>I</i></span><span class="b"><u>U</u></span>
                <span class="b"><app-icon name="expand" w="13"></app-icon></span>
            </div>
            <div class="text"><slot></slot></div>
        `;
    }
}
customElements.define('notes-editor', NotesEditor);

class SaveFab extends HTMLElement {
    constructor() {
        super();
        this.attachShadow({ mode: 'open' });
        this.shadowRoot.innerHTML = `
            <style>
                :host {
                    position: absolute;
                    right: 11px;
                    top: 734px;
                    width: 40px;
                    height: 40px;
                    border-radius: 50%;
                    background: #ffa400;
                    color: #0b3340;
                    display: flex;
                    align-items: center;
                    justify-content: center;
                }
            </style>
            <app-icon name="save" w="14" h="16"></app-icon>
        `;
    }
}
customElements.define('save-fab', SaveFab);

class ScrollBar extends HTMLElement {
    constructor() {
        super();
        this.attachShadow({ mode: 'open' });
        this.shadowRoot.innerHTML = `
            <style>
                :host {
                    display: block;
                    position: relative;
                    width: 17px;
                    flex: none;
                    background: #f1f1f1;
                }
                .thumb { position: absolute; left: 2px; right: 2px; background: #c1c1c1; }
                .up, .down {
                    position: absolute; left: 4px;
                    border: 4px solid transparent;
                    border-top: 0; border-bottom: 4px solid #7d7d7d;
                }
                .up { top: 6px; }
                .down { bottom: 6px; transform: rotate(180deg); }
            </style>
            <div class="up"></div>
            <div class="thumb" style="top:${this.getAttribute('thumb-top')}px;height:${this.getAttribute('thumb-height')}px"></div>
            <div class="down"></div>
        `;
    }
}
customElements.define('scroll-bar', ScrollBar);
</script>
</body>
</html>
